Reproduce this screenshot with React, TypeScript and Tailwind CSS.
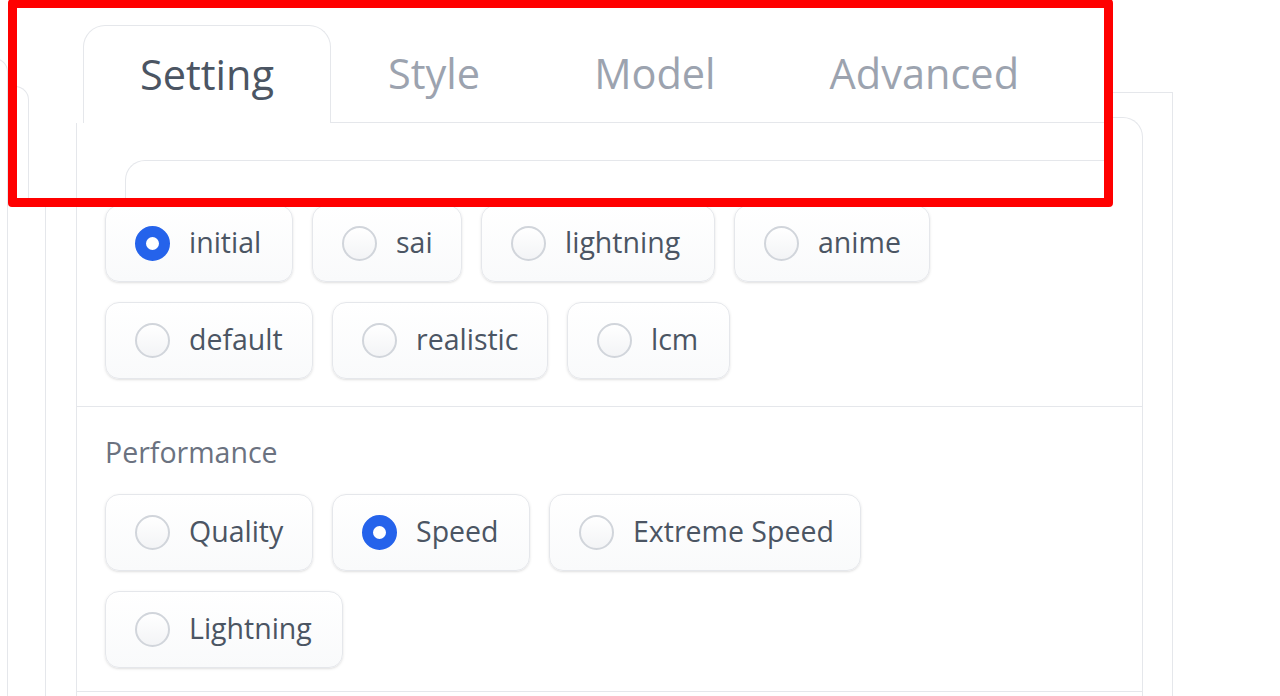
import React from 'react';

type Option = { label: string; width: string; checked?: boolean };

const presetRows: Option[][] = [
  [
    { label: 'initial', width: 'w-[188px]', checked: true },
    { label: 'sai', width: 'w-[150px]' },
    { label: 'lightning', width: 'w-[234px]' },
    { label: 'anime', width: 'w-[196px]' },
  ],
  [
    { label: 'default', width: 'w-[208px]' },
    { label: 'realistic', width: 'w-[216px]' },
    { label: 'lcm', width: 'w-[163px]' },
  ],
];

const performanceRows: Option[][] = [
  [
    { label: 'Quality', width: 'w-[208px]' },
    { label: 'Speed', width: 'w-[198px]', checked: true },
    { label: 'Extreme Speed', width: 'w-[312px]' },
  ],
  [{ label: 'Lightning', width: 'w-[238px]' }],
];

const Radio: React.FC<{ checked?: boolean }> = ({ checked }) =>
  checked ? (
    <span className="w-[35px] h-[35px] shrink-0 rounded-full border-[11px] border-[#2563eb] bg-white" />
  ) : (
    <span className="w-[35px] h-[35px] shrink-0 rounded-full border-2 border-[#d1d5db] bg-linear-to-b from-white to-[#f3f4f6]" />
  );

const Chip: React.FC<{ option: Option }> = ({ option }) => (
  <label
    className={`${option.width} h-[77px] flex items-center gap-[19px] pl-[29px] rounded-[14px] border border-[#e5e7eb] bg-linear-to-b from-white to-[#f9fafb] shadow-sm`}
  >
    <Radio checked={option.checked} />
    <span className="text-[28.5px] leading-none text-[#4b5563] whitespace-nowrap -mt-[3px]">{option.label}</span>
  </label>
);

const ChipRows: React.FC<{ rows: Option[][] }> = ({ rows }) => (
  <div className="flex flex-col gap-[20px]">
    {rows.map((row, i) => (
      <div key={i} className="flex gap-[19px]">
        {row.map((option) => (
          <Chip key={option.label} option={option} />
        ))}
      </div>
    ))}
  </div>
);

export default function App() {
  return (
    <div className="relative w-[1280px] h-[696px] overflow-hidden bg-white font-['Open_Sans',sans-serif]">
      {/* fragments of neighbouring blocks, cut off by the crop */}
      <div className="absolute -left-[40px] top-[58px] w-[48px] h-[700px] border-t border-r border-[#e5e7eb] rounded-tr-[14px]" />
      <div className="absolute left-[10px] top-[86px] w-[19px] h-[121px] border-t border-r border-[#e5e7eb] rounded-tr-[14px]" />
      <div className="absolute left-[45px] top-[207px] w-px h-[500px] bg-[#e5e7eb]" />
      <div className="absolute left-[1100px] top-[92px] w-[73px] h-[620px] border-t border-r border-[#e5e7eb]" />

      <div className="relative pl-[76px] pt-[25px]">
        {/* tab bar */}
        <div className="relative z-10 flex w-[1032px] h-[98px] bg-white">
          <div className="w-[7px]" />
          <button className="w-[248px] h-full flex items-center justify-center rounded-t-[22px] border border-b-0 border-[#e5e7eb] bg-white text-[41.5px] text-[#4b5563]">
            Setting
          </button>
          <div className="flex-1 flex border-b border-[#e5e7eb]">
            {['Style', 'Model', 'Advanced'].map((t) => (
              <button key={t} className="h-full px-[57px] flex items-center text-[41.5px] text-[#9ca3af]">
                {t}
              </button>
            ))}
          </div>
        </div>

        {/* tab panel */}
        <div className="-mt-[6px] w-[1067px] border border-b-0 border-[#e5e7eb] rounded-tr-[20px]">
          <div className="pt-[42px] pl-[28px] pb-[27px] border-b border-[#e5e7eb]">
            <div className="ml-[20px] w-[983px] h-[45px] border-t border-l border-[#e5e7eb] rounded-tl-[20px]" />
            <ChipRows rows={presetRows} />
          </div>

          <div className="pt-[27px] pl-[28px] pb-[23px] border-b border-[#e5e7eb]">
            <div className="h-[36px] flex items-center text-[28.5px] text-[#6b7280]">Performance</div>
            <div className="mt-[24px]">
              <ChipRows rows={performanceRows} />
            </div>
          </div>

          <div className="h-[120px]" />
        </div>
      </div>

      {/* annotation frame */}
      <div className="absolute z-20 left-[8px] -top-[1px] w-[1105px] h-[208px] border-[9px] border-[#ff0000] rounded-[4px] pointer-events-none" />
    </div>
  );
}
